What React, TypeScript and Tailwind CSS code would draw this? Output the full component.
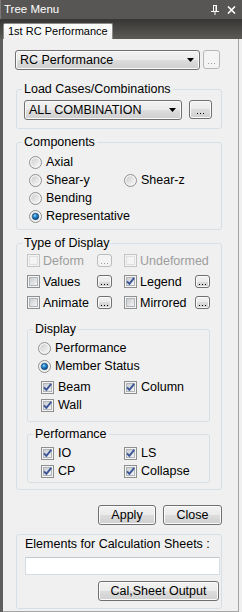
import React from "react";

const face = "font-['Liberation_Sans',Arial,sans-serif]";
const btn =
  "border border-[#707070] rounded-[3px] bg-[linear-gradient(to_bottom,#f2f2f2_0%,#ebebeb_50%,#dddddd_50%,#cfcfcf_100%)] shadow-[inset_0_0_0_1px_#fbfbfb]";

function Check({ on = false, off = false }: { on?: boolean; off?: boolean }) {
  return (
    <svg width="13" height="13" viewBox="0 0 13 13" className="shrink-0">
      <defs>
        <linearGradient id="cb" x1="0" y1="0" x2="1" y2="1">
          <stop offset="0" stopColor="#c6cacf" />
          <stop offset="1" stopColor="#f6f6f6" />
        </linearGradient>
      </defs>
      <rect x="0.5" y="0.5" width="12" height="12" fill="#f4f4f4" stroke={off ? "#c5c5c5" : "#8e8f8f"} />
      <rect x="2.5" y="2.5" width="8" height="8" fill={off ? "#f4f4f4" : "url(#cb)"} stroke={off ? "#e0e0e0" : "#b1b5ba"} />
      {on && <path d="M3 6.3L5.4 8.8L10.2 2.8" fill="none" stroke="#3a5597" strokeWidth="1.9" />}
    </svg>
  );
}

function Radio({ on = false }: { on?: boolean }) {
  return (
    <svg width="13" height="13" viewBox="0 0 13 13" className="shrink-0">
      <defs>
        <linearGradient id="rb" x1="0" y1="0" x2="1" y2="1">
          <stop offset="0" stopColor="#cdcdcd" />
          <stop offset="1" stopColor="#f8f8f8" />
        </linearGradient>
        <radialGradient id="rd" cx="0.4" cy="0.35" r="0.7">
          <stop offset="0" stopColor="#8fd6ff" />
          <stop offset="0.45" stopColor="#1f80c8" />
          <stop offset="1" stopColor="#0b3f78" />
        </radialGradient>
      </defs>
      <circle cx="6.5" cy="6.5" r="6" fill="#f4f4f4" stroke="#8e8f8f" />
      <circle cx="6.5" cy="6.5" r="4.3" fill="url(#rb)" />
      {on && <circle cx="6.5" cy="6.5" r="3.2" fill="url(#rd)" stroke="#0d3a6b" strokeWidth="0.6" />}
    </svg>
  );
}

function Dots({ c = "bg-[#000]" }: { c?: string }) {
  return (
    <span className="flex gap-[2px]">
      <span className={`h-[1px] w-[1px] ${c}`} />
      <span className={`h-[1px] w-[1px] ${c}`} />
      <span className={`h-[1px] w-[1px] ${c}`} />
    </span>
  );
}

function SmallBtn({ off = false }: { off?: boolean }) {
  if (off)
    return (
      <span className="flex h-[13px] w-[15px] shrink-0 items-end justify-center rounded-[3px] border border-[#b9bdc0] bg-[#f4f4f4] pb-[2px]">
        <Dots c="bg-[#9a9a9a]" />
      </span>
    );
  return (
    <span className={`${btn} flex h-[13px] w-[15px] shrink-0 items-end justify-center pb-[2px]`}>
      <Dots />
    </span>
  );
}

function Combo({ text, w }: { text: string; w: string }) {
  return (
    <div className={`${btn} flex h-[20px] items-center justify-between pl-[4px] pr-[5px] ${w}`}>
      <span className="leading-[14px]">{text}</span>
      <svg width="7" height="4" viewBox="0 0 7 4">
        <path d="M0 0h7L3.5 4z" fill="#000" />
      </svg>
    </div>
  );
}

function Group({ label, className = "", children }: { label?: string; className?: string; children: React.ReactNode }) {
  return (
    <div className={`rounded-[3px] border border-[#d5dfe5] ${className}`}>
      {label && <div className="-mt-[8px] ml-[5px] w-fit bg-[#f0f0f0] px-[2px] leading-[14px]">{label}</div>}
      {children}
    </div>
  );
}

function Opt({ kind, on, text, w }: { kind: "r" | "c"; on?: boolean; text: string; w?: string }) {
  return (
    <div className={`flex items-center gap-[4px] ${w ?? ""}`}>
      {kind === "r" ? <Radio on={on} /> : <Check on={on} />}
      <span className="leading-[14px]">{text}</span>
    </div>
  );
}

function TypeRow({ a, aOn, b, bOn, off }: { a: string; aOn?: boolean; b: string; bOn?: boolean; off?: boolean }) {
  return (
    <div className="flex h-[21px] items-center pl-[10px]">
      <div className="flex w-[70px] items-center gap-[3px]">
        <Check on={aOn} off={off} />
        <span className={`leading-[14px] ${off ? "text-[#9d9d9d]" : ""}`}>{a}</span>
      </div>
      <SmallBtn off={off} />
      <div className="w-[12px]" />
      <div className="flex w-[71px] items-center gap-[3px]">
        <Check on={bOn} off={off} />
        <span className={`leading-[14px] ${off ? "text-[#9d9d9d]" : ""}`}>{b}</span>
      </div>
      {!off && <SmallBtn />}
    </div>
  );
}

export default function App() {
  return (
    <div className={`${face} flex h-[612px] w-[242px] flex-col overflow-hidden bg-[#f0f0f0] text-[12.5px] text-black`}>
      <div className="flex h-[19px] shrink-0 items-center justify-between border-l border-[#7a7977] bg-[#575655] pl-[3px] pr-[6px] text-[11.5px] text-white">
        <span>Tree Menu</span>
        <div className="flex items-center gap-[8px]">
          <svg width="8" height="10" viewBox="0 0 8 10">
            <path d="M2 0h4v1H2zM2 1h1v5H2zM4.5 1h1.5v5H4.5zM0 6h8v1H0zM3.5 7h1v3h-1z" fill="#fff" />
          </svg>
          <svg width="9" height="8" viewBox="0 0 9 8">
            <path d="M1 0.5L8 7.5M8 0.5L1 7.5" stroke="#fff" strokeWidth="1.6" />
          </svg>
        </div>
      </div>

      <div className="flex h-[20px] shrink-0 items-end bg-[linear-gradient(to_bottom,#373634,#5b5a57)] pl-[3px]">
        <div className="flex h-[16px] w-[110px] items-center rounded-t-[2px] border border-b-0 border-[#8c8c8c] bg-[linear-gradient(to_bottom,#ffffff,#f0f0f0)] pl-[4px] text-[11px]">
          1st RC Performance
        </div>
      </div>

      <div className="flex flex-1">
        <div className="w-[3px] bg-[#5e5e5e]" />
        <div className="flex w-[236px] flex-col border-r border-b border-[#a5a5a5]">
          <div className="ml-[12px] mt-[11px] flex h-[20px] gap-[3px]">
            <Combo text="RC Performance" w="w-[185px]" />
            <div className="flex h-[19px] w-[17px] items-end justify-center rounded-[3px] border border-[#b3b7ba] bg-[#f4f4f4] pb-[4px]">
              <Dots c="bg-[#9a9a9a]" />
            </div>
          </div>

          <Group label="Load Cases/Combinations" className="ml-[13px] mt-[19px] w-[206px] pb-[8px]">
            <div className="ml-[7px] mt-[4px] flex gap-[7px]">
              <div className="flex">
                <Combo text="ALL COMBINATION" w="w-[158px] h-[19px]" />
              </div>
              <div className={`${btn} flex h-[19px] w-[23px] items-end justify-center pb-[4px]`}>
                <Dots />
              </div>
            </div>
          </Group>

          <Group label="Components" className="ml-[13px] mt-[13px] w-[206px] pb-[4px]">
            <div className="ml-[12px] mt-[4px] grid grid-cols-[95px_1fr] auto-rows-[18px] items-center">
              <Opt kind="r" text="Axial" />
              <div />
              <Opt kind="r" text="Shear-y" />
              <Opt kind="r" text="Shear-z" />
              <Opt kind="r" text="Bending" />
              <div />
              <Opt kind="r" on text="Representative" w="col-span-2" />
            </div>
          </Group>

          <Group label="Type of Display" className="ml-[13px] mt-[13px] w-[206px] pb-[6px]">
            <TypeRow a="Deform" b="Undeformed" off />
            <TypeRow a="Values" b="Legend" bOn />
            <TypeRow a="Animate" b="Mirrored" />

            <Group label="Display" className="ml-[10px] mt-[16px] w-[183px] pb-[7px]">
              <div className="ml-[10px] mt-[3px] flex flex-col">
                <div className="flex h-[18px] items-center">
                  <Opt kind="r" text="Performance" />
                </div>
                <div className="flex h-[18px] items-center">
                  <Opt kind="r" on text="Member Status" />
                </div>
              </div>
              <div className="ml-[13px] mt-[3px] grid grid-cols-[83px_1fr] auto-rows-[18px] items-center">
                <Opt kind="c" on text="Beam" />
                <Opt kind="c" on text="Column" />
                <Opt kind="c" on text="Wall" />
              </div>
            </Group>

            <Group label="Performance" className="ml-[10px] mt-[12px] w-[183px] pb-[2px]">
              <div className="ml-[13px] mt-[3px] grid grid-cols-[83px_1fr] auto-rows-[18px] items-center">
                <Opt kind="c" on text="IO" />
                <Opt kind="c" on text="LS" />
                <Opt kind="c" on text="CP" />
                <Opt kind="c" on text="Collapse" />
              </div>
            </Group>
          </Group>

          <div className="ml-[13px] mt-[15px] flex w-[206px] justify-end gap-[7px]">
            <button className={`${btn} h-[20px] w-[58px] leading-[14px]`}>Apply</button>
            <button className={`${btn} h-[20px] w-[59px] leading-[14px]`}>Close</button>
          </div>

          <Group className="ml-[13px] mt-[9px] w-[206px] pb-[7px]">
            <div className="mt-[2px] pl-[8px] leading-[14px]">Elements for Calculation Sheets :</div>
            <div className="ml-[8px] mt-[6px] h-[18px] w-[195px] border border-[#d6dce3] border-t-[#c2c8d0] bg-white" />
            <div className="mt-[6px] flex justify-end pr-[2px]">
              <button className={`${btn} h-[20px] w-[121px] leading-[14px]`}>Cal,Sheet Output</button>
            </div>
          </Group>
        </div>
        <div className="flex-1 bg-[#f0f0f0]" />
      </div>
    </div>
  );
}
